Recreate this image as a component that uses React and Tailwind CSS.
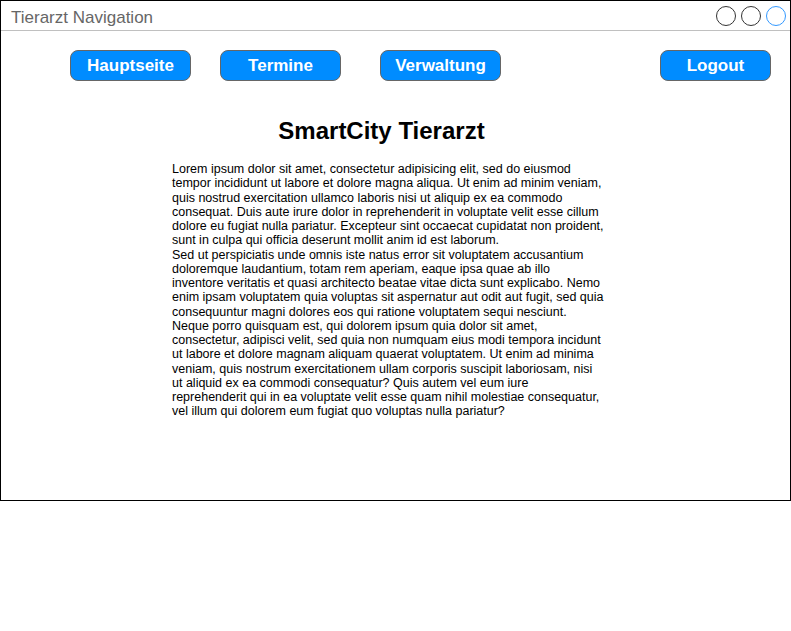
import React from 'react';

const lines = [
  'Lorem ipsum dolor sit amet, consectetur adipisicing elit, sed do eiusmod',
  'tempor incididunt ut labore et dolore magna aliqua. Ut enim ad minim veniam,',
  'quis nostrud exercitation ullamco laboris nisi ut aliquip ex ea commodo',
  'consequat. Duis aute irure dolor in reprehenderit in voluptate velit esse cillum',
  'dolore eu fugiat nulla pariatur. Excepteur sint occaecat cupidatat non proident,',
  'sunt in culpa qui officia deserunt mollit anim id est laborum.',
  'Sed ut perspiciatis unde omnis iste natus error sit voluptatem accusantium',
  'doloremque laudantium, totam rem aperiam, eaque ipsa quae ab illo',
  'inventore veritatis et quasi architecto beatae vitae dicta sunt explicabo. Nemo',
  'enim ipsam voluptatem quia voluptas sit aspernatur aut odit aut fugit, sed quia',
  'consequuntur magni dolores eos qui ratione voluptatem sequi nesciunt.',
  'Neque porro quisquam est, qui dolorem ipsum quia dolor sit amet,',
  'consectetur, adipisci velit, sed quia non numquam eius modi tempora incidunt',
  'ut labore et dolore magnam aliquam quaerat voluptatem. Ut enim ad minima',
  'veniam, quis nostrum exercitationem ullam corporis suscipit laboriosam, nisi',
  'ut aliquid ex ea commodi consequatur? Quis autem vel eum iure',
  'reprehenderit qui in ea voluptate velit esse quam nihil molestiae consequatur,',
  'vel illum qui dolorem eum fugiat quo voluptas nulla pariatur?',
];

const NavButton = ({ label, className = '' }) => (
  <button
    className={`h-[31px] rounded-[8px] border border-[#666666] bg-[#008cff] text-white font-bold text-[17px] leading-none ${className}`}
  >
    {label}
  </button>
);

const App = () => {
  return (
    <div className="w-[791px] h-[631px] bg-white" style={{ fontFamily: '"Liberation Sans", Arial, sans-serif' }}>
      <div className="w-[791px] h-[501px] border border-black flex flex-col">
        {/* title bar */}
        <div className="h-[30px] flex items-center justify-between border-b border-[#c0c0c0] pl-[10px] pr-[4px] shrink-0">
          <span className="text-[17px] text-[#666666] leading-none pt-[3px]">Tierarzt Navigation</span>
          <div className="flex gap-[5px]">
            <div className="w-[20px] h-[20px] rounded-full border border-[#333333]" />
            <div className="w-[20px] h-[20px] rounded-full border border-[#333333]" />
            <div className="w-[20px] h-[20px] rounded-full border border-[#3399ff]" />
          </div>
        </div>

        {/* nav buttons */}
        <div className="flex mt-[19px] pl-[69px]">
          <NavButton label="Hauptseite" className="w-[121px]" />
          <NavButton label="Termine" className="w-[121px] ml-[29px]" />
          <NavButton label="Verwaltung" className="w-[121px] ml-[39px]" />
          <NavButton label="Logout" className="w-[111px] ml-[159px]" />
        </div>

        <h1 className="mt-[36px] text-center text-[24px] leading-[28px] font-bold text-black pr-[28px]">
          SmartCity Tierarzt
        </h1>

        <div className="mt-[17px] ml-[171px] text-[12.5px] leading-[14.25px] text-black">
          {lines.map((line, i) => (
            <div key={i} className="whitespace-nowrap">{line}</div>
          ))}
        </div>
      </div>
    </div>
  );
};

export default App;
